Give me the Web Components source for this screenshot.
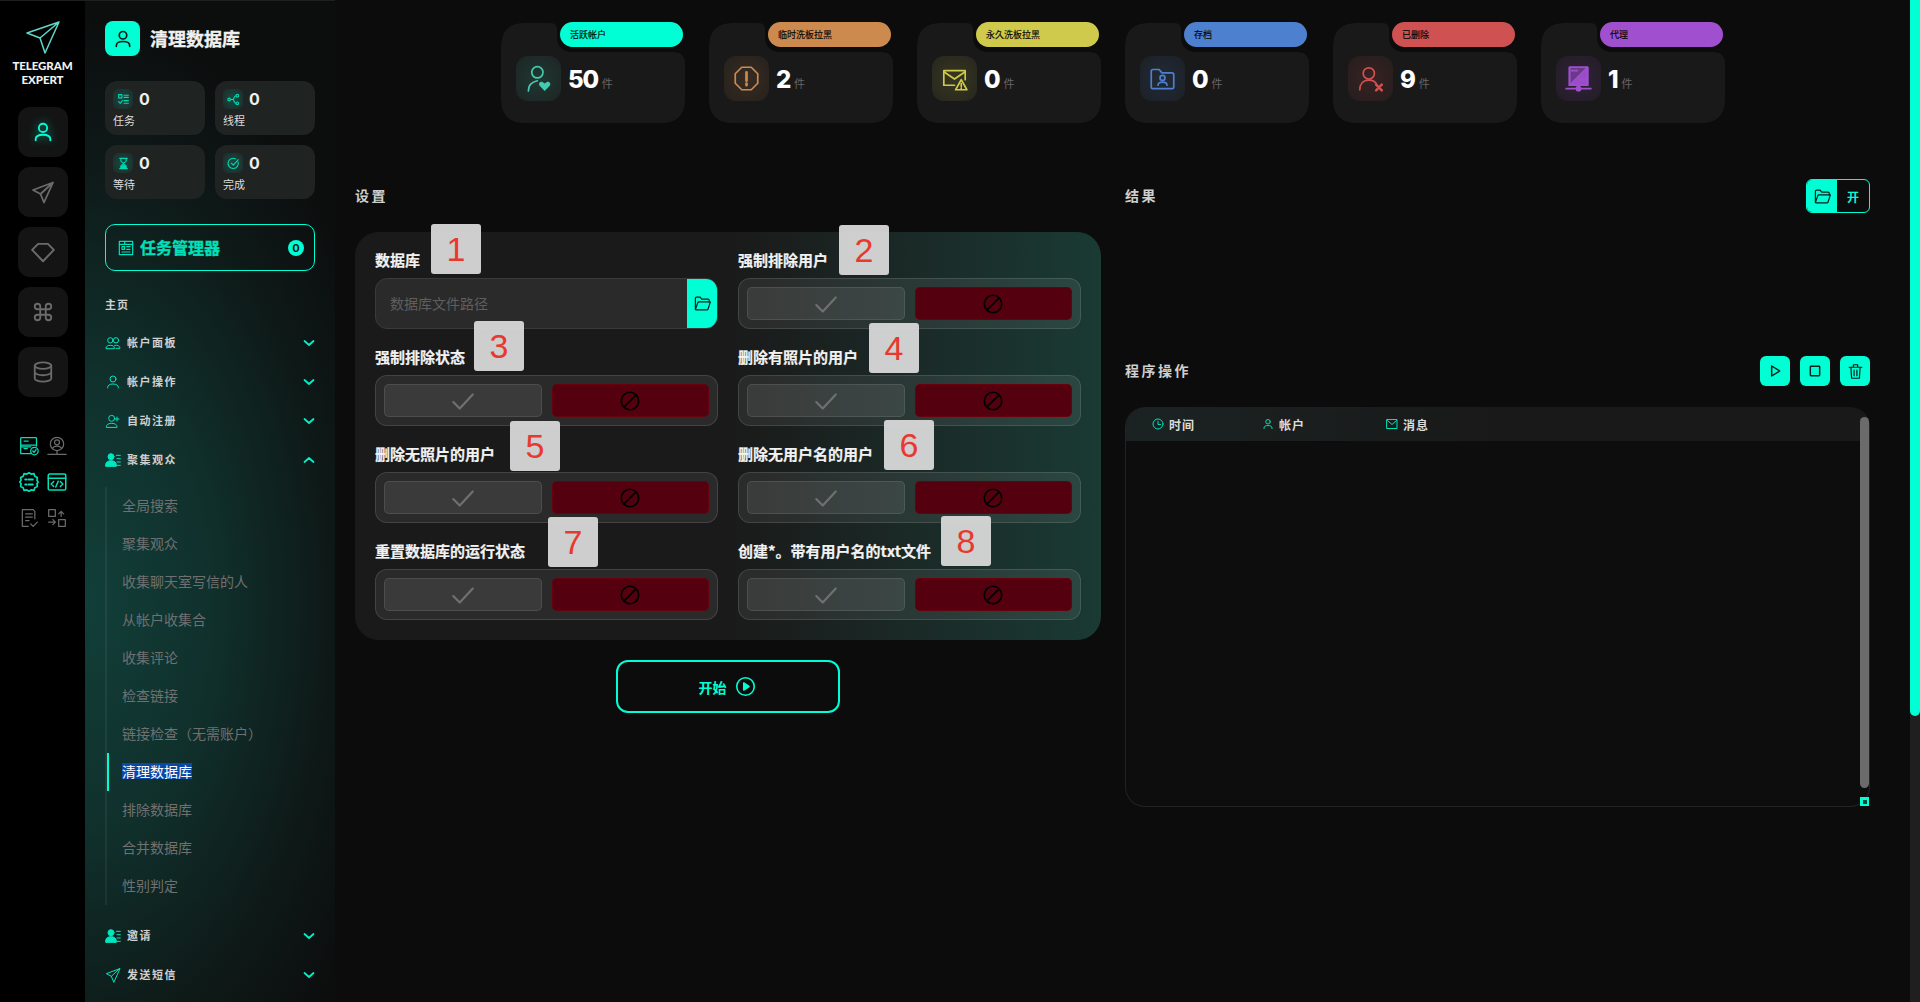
<!DOCTYPE html>
<html lang="zh">
<head>
<meta charset="utf-8">
<title>Telegram Expert</title>
<style>
  html, body { margin: 0; height: 100%; background: #0c0c0c; overflow: hidden; }
  body { font-family: "Noto Sans CJK SC", "Noto Sans", sans-serif; color: #fff; }
</style>
</head>
<body>
<te-app>
  <te-rail slot="rail"></te-rail>

  <te-side slot="side" heading="清理数据库">
    <te-mini-stat slot="stats" icon="tasks" label="任务"></te-mini-stat>
    <te-mini-stat slot="stats" icon="nodes" label="线程"></te-mini-stat>
    <te-mini-stat slot="stats" icon="hourglass" label="等待"></te-mini-stat>
    <te-mini-stat slot="stats" icon="checkCircle" label="完成"></te-mini-stat>

    <te-menu-row icon="users" label="帐户面板"></te-menu-row>
    <te-menu-row icon="user" label="帐户操作"></te-menu-row>
    <te-menu-row icon="userPlus" label="自动注册"></te-menu-row>
    <te-menu-row icon="userList" label="聚集观众" open></te-menu-row>
    <te-sub-list>
      <te-sub-item>全局搜索</te-sub-item>
      <te-sub-item>聚集观众</te-sub-item>
      <te-sub-item>收集聊天室写信的人</te-sub-item>
      <te-sub-item>从帐户收集合</te-sub-item>
      <te-sub-item>收集评论</te-sub-item>
      <te-sub-item>检查链接</te-sub-item>
      <te-sub-item>链接检查（无需账户）</te-sub-item>
      <te-sub-item active>清理数据库</te-sub-item>
      <te-sub-item>排除数据库</te-sub-item>
      <te-sub-item>合并数据库</te-sub-item>
      <te-sub-item>性别判定</te-sub-item>
    </te-sub-list>
    <te-menu-row icon="userList" label="邀请"></te-menu-row>
    <te-menu-row icon="send" label="发送短信"></te-menu-row>
  </te-side>

  <te-main slot="main">
    <te-stat-card slot="stats" label="活跃帐户" value="50" icon="userHeart" color="#00ffd5" tint="#45c9af"></te-stat-card>
    <te-stat-card slot="stats" label="临时洗板拉黑" value="2" icon="octagon" color="#cc8a4e"></te-stat-card>
    <te-stat-card slot="stats" label="永久洗板拉黑" value="0" icon="mailWarn" color="#cfca4c"></te-stat-card>
    <te-stat-card slot="stats" label="存档" value="0" icon="folderUser" color="#4d80cf"></te-stat-card>
    <te-stat-card slot="stats" label="已删除" value="9" icon="userX" color="#cf5151"></te-stat-card>
    <te-stat-card slot="stats" label="代理" value="1" icon="proxy" color="#a04fcf"></te-stat-card>

    <te-settings slot="left">
      <te-field label="数据库"><te-path-input placeholder="数据库文件路径"></te-path-input></te-field>
      <te-field label="强制排除用户"><te-toggle></te-toggle></te-field>
      <te-field label="强制排除状态"><te-toggle></te-toggle></te-field>
      <te-field label="删除有照片的用户"><te-toggle></te-toggle></te-field>
      <te-field label="删除无照片的用户"><te-toggle></te-toggle></te-field>
      <te-field label="删除无用户名的用户"><te-toggle></te-toggle></te-field>
      <te-field label="重置数据库的运行状态"><te-toggle></te-toggle></te-field>
      <te-field label="创建*。带有用户名的txt文件"><te-toggle></te-toggle></te-field>
    </te-settings>

    <te-log slot="right"></te-log>

    <te-marker slot="over" n="1" x="431" y="224"></te-marker>
    <te-marker slot="over" n="2" x="839" y="225"></te-marker>
    <te-marker slot="over" n="3" x="474" y="321"></te-marker>
    <te-marker slot="over" n="4" x="869" y="323"></te-marker>
    <te-marker slot="over" n="5" x="510" y="421"></te-marker>
    <te-marker slot="over" n="6" x="884" y="420"></te-marker>
    <te-marker slot="over" n="7" x="548" y="517"></te-marker>
    <te-marker slot="over" n="8" x="941" y="516"></te-marker>
  </te-main>
</te-app>

<script>
// stroke icons, 24x24, drawn with currentColor
const icons = {
  user: '<circle cx="12" cy="7.5" r="4.5"/><path d="M4 21v-1c0-3 3-5 8-5s8 2 8 5v1"/>',
  users: '<circle cx="8" cy="8" r="4"/><circle cx="16.5" cy="8" r="4"/><path d="M1.5 20v-.5c0-2.500 2.500-4 6.500-4s6 1.500 6 4v.5zM14.500 15.500c4.500-.5 8 1 8 4v.5h-6"/>',
  userPlus: '<circle cx="10" cy="8" r="4.500"/><path d="M2 21v-.5c0-3 3-5 8-5s8 2 8 5v.5zM18 6v6M15 9h6"/>',
  userList: '<circle cx="9" cy="7" r="4.500" fill="currentColor"/><path d="M1 21v-2c0-3 3-6 8-6s8 3 8 6v2z" fill="currentColor"/><path d="M17 5h6M18 10h5M18 15h5M18 20h5"/>',
  send: '<path d="M22 2.500 2 10l7.500 4L13 22.500zM22 2.500 9.500 14"/>',
  diamond: '<path d="M7.500 4.500h9L22 10 12 20.500 2 10z"/>',
  command: '<path d="M15 6v12a3 3 0 1 0 3-3H6a3 3 0 1 0 3 3V6a3 3 0 1 0-3 3h12a3 3 0 1 0-3-3"/>',
  database: '<ellipse cx="12" cy="5" rx="9" ry="3.500"/><path d="M3 5v14c0 1.900 4 3.500 9 3.500s9-1.600 9-3.500V5M3 12c0 1.900 4 3.500 9 3.500s9-1.600 9-3.500"/>',
  tasks: '<rect x="3" y="3" width="6" height="6"/><path d="M13 4h8M13 8h8M13 14h8M13 19h8M3 16l3 3 4-5"/>',
  nodes: '<circle cx="4" cy="12" r="2.500"/><circle cx="19" cy="5" r="2.500"/><circle cx="19" cy="19" r="2.500"/><path d="M6.500 12H11c2 0 2-7 5.500-7M11 12c2 0 2 7 5.500 7"/>',
  hourglass: '<path d="M5 2.500h14M5 21.500h14M7 3v4c0 2 5 3.500 5 5s-5 3-5 5v4M17 3v4c0 2-5 3.500-5 5s5 3 5 5v4"/><path d="M8 21v-3l4-3 4 3v3z" fill="currentColor"/>',
  checkCircle: '<path d="M20.500 9A9.500 9.500 0 1 1 16 3.500"/><path d="m8 11.500 3.500 3.500L21 5"/>',
  taskBoard: '<rect x="2" y="2" width="20" height="20"/><path d="M2 6.500h20M6 10h4v4H6zM13 10h5M13 14h5M6 18h12M10 2v4.500"/>',
  chevDown: '<path d="m3 8 9 8 9-8"/>',
  chevUp: '<path d="m3 16 9-8 9 8"/>',
  userHeart: '<circle cx="11" cy="6.500" r="5"/><path d="M3 23c0-5 3-8 8-9"/><path d="M17.500 23l-4.500-4.500c-1.500-2 .5-4 2.500-3.500l2 1.500 2-1.500c2-.5 4 1.500 2.500 3.500z" fill="currentColor" stroke="none"/>',
  octagon: '<path d="M7.800 2h8.400L22 7.800v8.400L16.200 22H7.800L2 16.200V7.800z"/><path d="M12 6.500v7.500M12 16.500v1.500" stroke-width="2.400"/>',
  mailWarn: '<path d="M12 18H2.500V5h19v8"/><path d="m2.500 6 9.500 6.500L21.500 6"/><path d="m18 13 5 9H13z"/><path d="M18 16.500V19M18 20.500v.3"/>',
  folderUser: '<path d="M2 5.500A1.500 1.500 0 0 1 3.500 4H9l2.500 3h9A1.500 1.500 0 0 1 22 8.500v11a1.500 1.500 0 0 1-1.500 1.500h-17A1.500 1.500 0 0 1 2 19.500z"/><circle cx="12" cy="11.500" r="2.200"/><path d="M8 18c0-2 1.500-2.800 4-2.800s4 .8 4 2.800"/>',
  userX: '<circle cx="10.500" cy="7.500" r="5"/><path d="M2.500 22c0-5 3-8.500 8-8.500 3.500 0 6 1.500 7 4"/><path d="m17 17.500 5 5M22 17.500l-5 5" stroke-width="2.200"/>',
  proxy: '<path d="M4 2h16v16H4z" fill="currentColor" fill-opacity=".55"/><path d="M4 18 20 2v16z" fill="currentColor" fill-opacity=".9"/><path d="M4 2h16v16H4zM1 21h22M12 18v3M6 5h5M13 13h5"/><circle cx="12" cy="21" r="1.800" fill="currentColor"/>',
  folderOpen: '<path d="M3 19V5.500A1.500 1.500 0 0 1 4.500 4H9l2 2.500h8A1.500 1.500 0 0 1 20.500 8v2"/><path d="M3 19.500 6 11a1.500 1.500 0 0 1 1.400-1H22l-3 9a1.500 1.500 0 0 1-1.400 1H4a1 1 0 0 1-1-.5z"/>',
  check: '<path d="m3 13 6 6L21 6"/>',
  ban: '<circle cx="12" cy="12" r="9.500"/><path d="M5.500 18.500l13-13"/>',
  play: '<path d="M7 4.500v15L19 12z"/>',
  stop: '<rect x="5" y="5" width="14" height="14" rx="1"/>',
  trash: '<path d="M3 6h18M9 5V2.500h6V5M5.500 6l1 15.500h11l1-15.500M10 10v8M14 10v8"/>',
  playCircle: '<circle cx="12" cy="12" r="10"/><path d="M10 8v8l6-4z" fill="currentColor"/>',
  clock: '<circle cx="12" cy="12" r="10"/><path d="M12 6.500V13h5"/>',
  mail: '<rect x="2" y="3" width="20" height="18"/><path d="m3 5 9 8 9-8"/>',
  server: '<rect x="2" y="2" width="19" height="9" rx="1"/><path d="M21 12v-1M2 11v10h13M6 6h5M6 15h4M2 13h12"/><circle cx="18.500" cy="18" r="4.500"/><path d="m16.500 18 1.500 1.500 2.500-3"/>',
  userPin: '<circle cx="12" cy="9.500" r="8"/><circle cx="12" cy="7.500" r="3"/><path d="M6.500 15c1-2.500 3-3 5.500-3s4.500.5 5.500 3M1 22h22M12 17.500V22"/>',
  gearCard: '<path d="M9.500 2.500 12 1l2.500 1.500 3.500-.5 1 3 3 1.500-.5 3.500L23 12l-1.500 2 .5 3.500-3 1.500-1 3-3.500-.5L12 23l-2.500-1.500-3.500.5-1-3-3-1.500.5-3.500L1 12l1.500-2L2 6.500 5 5l1-3z"/><path d="M7.500 9h1.500M11.500 9h5M7.500 15h1.500M11.500 15h5" stroke-width="2.400"/>',
  codeWindow: '<rect x="1.500" y="2.500" width="21" height="19" rx="1.500"/><path d="M1.500 7.500h21M8 11.500l-3 3 3 3M16 11.500l3 3-3 3M13.500 11l-3 7"/>',
  docCheck: '<path d="M11 22H4V2h13l2 2v9"/><path d="M8 7h8M8 11h8M8 15h4M14 19l3 3 5-5"/>',
  swap: '<rect x="2" y="2" width="8" height="8"/><rect x="14" y="14" width="8" height="8"/><path d="M14 7l3-3 3 3M17 4v6M2 17h8M7 14l3 3-3 3"/>'
};

class TeIcon extends HTMLElement {
  static get observedAttributes() {
    return ['name', 'size', 'sw'];
  }

  constructor() {
    super();
    this.attachShadow({ mode: 'open' });
  }

  connectedCallback() {
    this.render();
  }

  attributeChangedCallback() {
    this.render();
  }

  render() {
    const size = this.getAttribute('size') || 24;
    const sw = this.getAttribute('sw') || 2;
    this.shadowRoot.innerHTML = `
      <style>
        :host { display: inline-flex; flex: none; line-height: 0; }
        svg { fill: none; stroke: currentColor; stroke-linejoin: round; stroke-linecap: round; }
      </style>
      <svg width="${size}" height="${size}" viewBox="0 0 24 24" stroke-width="${sw}">${icons[this.getAttribute('name')] || ''}</svg>`;
  }
}
customElements.define('te-icon', TeIcon);

const appTemplate = document.createElement('template');
appTemplate.innerHTML = `
  <style>
    :host { display: flex; position: relative; height: 1002px; }
    :host::before { content: ""; position: absolute; left: 0; right: 10px; top: 0; height: 1px; background: #1f1f1f; }
    .scroll { flex: none; width: 10px; background: #1f1f1f; }
    .thumb { height: 716px; background: #00ffd5; border-radius: 0 0 5px 5px; }
  </style>
  <slot name="rail"></slot>
  <slot name="side"></slot>
  <slot name="main"></slot>
  <div class="scroll"><div class="thumb"></div></div>
`;
class TeApp extends HTMLElement {
  connectedCallback() {
    this.attachShadow({ mode: 'open' }).appendChild(appTemplate.content.cloneNode(true));
  }
}
customElements.define('te-app', TeApp);

const railTemplate = document.createElement('template');
railTemplate.innerHTML = `
  <style>
    :host { display: flex; flex-direction: column; align-items: center; flex: none; width: 85px; background: #000; box-sizing: border-box; padding-top: 20px; }
    .plane { display: block; }
    .brand { margin-top: 5px; font: 900 11.5px/14px Lato, sans-serif; text-align: center; color: #f2f2f2; letter-spacing: -.1px; }
    .nav { display: flex; flex-direction: column; gap: 10px; margin-top: 20px; }
    .nav div { display: flex; align-items: center; justify-content: center; width: 50px; height: 50px; border-radius: 12px; background: #141414; color: #6b6b6b; }
    .nav .on { color: #00ffd5; }
    .nav .on te-icon { filter: drop-shadow(0 0 5px rgba(0, 255, 213, .6)); }
    .tools { display: grid; grid-template-columns: 20px 20px; gap: 16px 8px; margin-top: 39px; color: #6b6b6b; }
    .tools .t { color: #00e0bb; }
  </style>
  <svg class="plane" width="36" height="34" viewBox="0 0 36 34" fill="none" stroke="#5fd8c8" stroke-width="1.500" stroke-linejoin="round">
    <path d="M34 2 2 13l13 5 5 15zM34 2 15 18"/>
  </svg>
  <div class="brand">TELEGRAM<br>EXPERT</div>
  <div class="nav">
    <div class="on"><te-icon name="user" size="22"></te-icon></div>
    <div><te-icon name="send" size="24" sw="1.800"></te-icon></div>
    <div><te-icon name="diamond" size="26" sw="1.800"></te-icon></div>
    <div><te-icon name="command" size="22"></te-icon></div>
    <div><te-icon name="database" size="22"></te-icon></div>
  </div>
  <div class="tools">
    <te-icon class="t" name="server" size="20" sw="1.500"></te-icon>
    <te-icon name="userPin" size="20" sw="1.500"></te-icon>
    <te-icon class="t" name="gearCard" size="20" sw="2"></te-icon>
    <te-icon class="t" name="codeWindow" size="20" sw="1.800"></te-icon>
    <te-icon name="docCheck" size="20" sw="1.500"></te-icon>
    <te-icon name="swap" size="20" sw="1.500"></te-icon>
  </div>
`;
class TeRail extends HTMLElement {
  connectedCallback() {
    this.attachShadow({ mode: 'open' }).appendChild(railTemplate.content.cloneNode(true));
  }
}
customElements.define('te-rail', TeRail);

const sideTemplate = document.createElement('template');
sideTemplate.innerHTML = `
  <style>
    :host {
      display: block; flex: none; width: 250px; box-sizing: border-box; padding: 21px 20px 0;
      background: radial-gradient(ellipse 320px 580px at 0% 60%, #123f39 0%, #10302c 40%, #0e1a18 75%, #0c0e0e 100%);
    }
    .head { display: flex; align-items: center; gap: 10px; height: 35px; }
    .logo { display: flex; align-items: center; justify-content: center; width: 35px; height: 35px; border-radius: 8px; background: #00ffd5; color: #041a16; }
    .title { font-size: 18px; line-height: 35px; font-weight: 700; color: #f0f0f0; -webkit-text-stroke: .3px #f0f0f0; }
    .stats { display: grid; grid-template-columns: 100px 100px; gap: 10px; margin-top: 25px; }
    .manager { display: flex; align-items: center; box-sizing: border-box; height: 47px; margin-top: 25px; padding: 0 10px 0 12px; border: 1px solid #00ffd5; border-radius: 10px; color: #00e0bb; }
    .manager span { margin-left: 6px; flex: 1; font-size: 16px; line-height: 20px; padding-bottom: 2px; font-weight: 700; -webkit-text-stroke: .3px #00e0bb; }
    .manager b { display: flex; align-items: center; justify-content: center; width: 16px; height: 16px; border-radius: 50%; background: #00ffd5; color: #04211c; font: 900 12px/16px Lato, sans-serif; }
    .section { margin: 25px 0 11px; font-size: 11px; line-height: 16px; font-weight: 700; letter-spacing: 1px; color: #cfcfcf; }
  </style>
  <div class="head">
    <div class="logo"><te-icon name="user" size="20"></te-icon></div>
    <div class="title"></div>
  </div>
  <div class="stats"><slot name="stats"></slot></div>
  <div class="manager"><te-icon name="taskBoard" size="16" sw="1.800"></te-icon><span>任务管理器</span><b>0</b></div>
  <div class="section">主页</div>
  <slot></slot>
`;
class TeSide extends HTMLElement {
  connectedCallback() {
    const shadow = this.attachShadow({ mode: 'open' });
    shadow.appendChild(sideTemplate.content.cloneNode(true));
    shadow.querySelector('.title').textContent = this.getAttribute('heading');
  }
}
customElements.define('te-side', TeSide);

const miniTemplate = document.createElement('template');
miniTemplate.innerHTML = `
  <style>
    :host { display: block; box-sizing: border-box; height: 54px; padding: 8px; border-radius: 12px; background: #1f2322; }
    .top { display: flex; align-items: center; gap: 6px; height: 20px; }
    .tile { display: flex; align-items: center; justify-content: center; width: 20px; height: 20px; border-radius: 5px; background: radial-gradient(circle, #1c4a41, #1d2a28); color: #00d8b4; }
    .num { font: 700 16px/20px Inter, sans-serif; color: #eee; }
    .label { margin-top: 2px; font-size: 11px; line-height: 18px; color: #ddd; }
  </style>
  <div class="top"><div class="tile"><te-icon size="13"></te-icon></div><div class="num">0</div></div>
  <div class="label"></div>
`;
class TeMiniStat extends HTMLElement {
  connectedCallback() {
    const shadow = this.attachShadow({ mode: 'open' });
    shadow.appendChild(miniTemplate.content.cloneNode(true));
    shadow.querySelector('te-icon').setAttribute('name', this.getAttribute('icon'));
    shadow.querySelector('.label').textContent = this.getAttribute('label');
  }
}
customElements.define('te-mini-stat', TeMiniStat);

const rowTemplate = document.createElement('template');
rowTemplate.innerHTML = `
  <style>
    :host { display: flex; align-items: center; height: 39px; color: #00e6c0; }
    .label { flex: 1; margin-left: 6px; padding-bottom: 2px; font-size: 11px; font-weight: 700; letter-spacing: 1.500px; color: #d0d0d0; }
    te-icon.chev { color: #00f0c8; }
  </style>
  <te-icon class="ico" size="16" sw="1.500"></te-icon><div class="label"></div><te-icon class="chev" size="12" sw="3.600"></te-icon>
`;
class TeMenuRow extends HTMLElement {
  connectedCallback() {
    const shadow = this.attachShadow({ mode: 'open' });
    shadow.appendChild(rowTemplate.content.cloneNode(true));
    shadow.querySelector('.ico').setAttribute('name', this.getAttribute('icon'));
    shadow.querySelector('.label').textContent = this.getAttribute('label');
    shadow.querySelector('.chev').setAttribute('name', this.hasAttribute('open') ? 'chevUp' : 'chevDown');
  }
}
customElements.define('te-menu-row', TeMenuRow);

class TeSubList extends HTMLElement {
  connectedCallback() {
    this.attachShadow({ mode: 'open' }).innerHTML = `
      <style>:host { display: block; margin: 8px 0 11px; border-left: 2px solid rgba(255, 255, 255, .06); }</style>
      <slot></slot>`;
  }
}
customElements.define('te-sub-list', TeSubList);

class TeSubItem extends HTMLElement {
  connectedCallback() {
    this.attachShadow({ mode: 'open' }).innerHTML = `
      <style>
        :host { display: flex; align-items: center; position: relative; box-sizing: border-box; height: 38px; padding: 0 0 2px 15px; font-size: 14px; color: #707070; }
        :host([active]) { color: #fff; }
        :host([active])::before { content: ""; position: absolute; left: 0; top: 0; bottom: 0; width: 2px; background: #00ffd5; }
        :host([active]) span { display: block; height: 16px; line-height: 16px; background: #0b47a5; }
      </style>
      <span><slot></slot></span>`;
  }
}
customElements.define('te-sub-item', TeSubItem);

const mainTemplate = document.createElement('template');
mainTemplate.innerHTML = `
  <style>
    :host { display: block; position: relative; flex: 1; min-width: 0; box-sizing: border-box; padding: 22px 40px 0 20px; background: #0c0c0c; }
    .stats { display: flex; gap: 24px; margin-left: 146px; }
    .cols { display: grid; grid-template-columns: 746px 745px; gap: 24px; margin-top: 56px; }
    .head { display: flex; align-items: center; height: 34px; margin-bottom: 19px; }
    h2 { margin: 0; padding-bottom: 2px; font-size: 14px; font-weight: 700; letter-spacing: 2.500px; color: #cfcfcf; }
    .start { display: flex; align-items: center; justify-content: center; gap: 8px; box-sizing: border-box; width: 224px; height: 53px; margin: 20px auto 0; padding-right: 2px; border: 2px solid #00ffd5; border-radius: 12px; font-size: 14px; font-weight: 700; color: #00ffd5; }
  </style>
  <div class="stats"><slot name="stats"></slot></div>
  <div class="cols">
    <div>
      <div class="head"><h2>设置</h2></div>
      <slot name="left"></slot>
      <div class="start">开始<te-icon name="playCircle" size="21" sw="1.800"></te-icon></div>
    </div>
    <slot name="right"></slot>
  </div>
  <slot name="over"></slot>
`;
class TeMain extends HTMLElement {
  connectedCallback() {
    this.attachShadow({ mode: 'open' }).appendChild(mainTemplate.content.cloneNode(true));
  }
}
customElements.define('te-main', TeMain);

const statTemplate = document.createElement('template');
statTemplate.innerHTML = `
  <style>
    :host { display: block; position: relative; flex: none; width: 184px; height: 100px; margin-top: 1px; }
    .shape { position: absolute; inset: 0; background: #191919; clip-path: path("M24 0H50Q56 0 56 6V13Q56 29 72 29H172Q184 29 184 41V76Q184 100 160 100H24Q0 100 0 76V24Q0 0 24 0Z"); }
    .pill { position: absolute; left: 59px; top: -1px; box-sizing: border-box; width: 123px; height: 25px; padding-left: 10px; border-radius: 13px; font-size: 9px; line-height: 25px; color: #050505; background: var(--c); -webkit-text-stroke: .15px #050505; }
    .body { position: relative; display: flex; align-items: center; padding: 32px 0 0 15px; }
    .tile { display: flex; align-items: center; justify-content: center; width: 45px; height: 45px; border-radius: 12px; color: var(--t); background: radial-gradient(circle, color-mix(in srgb, var(--t) 17%, #191919), color-mix(in srgb, var(--t) 7%, #191919)); }
    .num { margin: 2px 0 0 7px; font: 800 24px/45px Inter, sans-serif; letter-spacing: -1.200px; color: #fff; }
    .unit { margin: 8px 0 0 4px; font-size: 11px; color: #666; }
  </style>
  <div class="shape"></div>
  <div class="pill"></div>
  <div class="body">
    <div class="tile"><te-icon size="27" sw="1.500"></te-icon></div>
    <div class="num"></div>
    <div class="unit">件</div>
  </div>
`;
class TeStatCard extends HTMLElement {
  connectedCallback() {
    const shadow = this.attachShadow({ mode: 'open' });
    shadow.appendChild(statTemplate.content.cloneNode(true));
    this.style.setProperty('--c', this.getAttribute('color'));
    this.style.setProperty('--t', this.getAttribute('tint') || this.getAttribute('color'));
    shadow.querySelector('.pill').textContent = this.getAttribute('label');
    shadow.querySelector('.num').textContent = this.getAttribute('value');
    shadow.querySelector('te-icon').setAttribute('name', this.getAttribute('icon'));
  }
}
customElements.define('te-stat-card', TeStatCard);

class TeSettings extends HTMLElement {
  connectedCallback() {
    this.attachShadow({ mode: 'open' }).innerHTML = `
      <style>
        :host { display: grid; grid-template-columns: 343px 343px; gap: 20px; box-sizing: border-box; width: 746px; height: 408px; padding: 20px; border-radius: 24px; background: linear-gradient(90deg, #1a1a1a 0%, #1a1a1a 50%, #1a3a34 100%); }
      </style>
      <slot></slot>`;
  }
}
customElements.define('te-settings', TeSettings);

class TeField extends HTMLElement {
  connectedCallback() {
    this.attachShadow({ mode: 'open' }).innerHTML = `
      <style>
        :host { display: block; }
        .label { height: 18px; margin-bottom: 8px; font-size: 15px; line-height: 16px; font-weight: 700; color: #f2f2f2; white-space: nowrap; -webkit-text-stroke: .2px #f2f2f2; }
      </style>
      <div class="label">${this.getAttribute('label')}</div>
      <slot></slot>`;
  }
}
customElements.define('te-field', TeField);

class TePathInput extends HTMLElement {
  connectedCallback() {
    this.attachShadow({ mode: 'open' }).innerHTML = `
      <style>
        :host { display: flex; box-sizing: border-box; height: 51px; border: 1px solid #3a3a3a; border-radius: 12px; background: #2a2a2a; overflow: hidden; }
        .text { flex: 1; padding-left: 14px; font-size: 14px; line-height: 49px; color: #5f5f5f; }
        .pick { display: flex; align-items: center; justify-content: center; width: 30px; background: #00ffd5; color: #04211c; }
      </style>
      <div class="text">${this.getAttribute('placeholder')}</div>
      <div class="pick"><te-icon name="folderOpen" size="19" sw="1.500"></te-icon></div>`;
  }
}
customElements.define('te-path-input', TePathInput);

const toggleTemplate = document.createElement('template');
toggleTemplate.innerHTML = `
  <style>
    :host { display: grid; grid-template-columns: 1fr 1fr; gap: 10px; box-sizing: border-box; height: 51px; padding: 8px; border: 1px solid rgba(255, 255, 255, .12); border-radius: 12px; background: rgba(255, 255, 255, .07); }
    div { display: flex; align-items: center; justify-content: center; border-radius: 5px; }
    .yes { border: 1px solid rgba(255, 255, 255, .1); background: rgba(255, 255, 255, .08); color: #707070; }
    .no { border: 1px solid rgba(255, 0, 0, .12); background: #54000f; color: #000; }
  </style>
  <div class="yes"><te-icon name="check" size="26" sw="2"></te-icon></div>
  <div class="no"><te-icon name="ban" size="22" sw="1.800"></te-icon></div>
`;
class TeToggle extends HTMLElement {
  connectedCallback() {
    this.attachShadow({ mode: 'open' }).appendChild(toggleTemplate.content.cloneNode(true));
  }
}
customElements.define('te-toggle', TeToggle);

const logTemplate = document.createElement('template');
logTemplate.innerHTML = `
  <style>
    :host { display: block; }
    .row { display: flex; align-items: center; justify-content: space-between; }
    h2 { margin: 0; padding-bottom: 2px; font-size: 14px; font-weight: 700; letter-spacing: 2.500px; color: #cfcfcf; }
    .open { display: flex; box-sizing: border-box; width: 64px; height: 34px; border: 1px solid #00ffd5; border-radius: 6px; overflow: hidden; }
    .open div { flex: 1; display: flex; align-items: center; justify-content: center; font-size: 12px; font-weight: 700; color: #00ffd5; }
    .open .a { flex: none; width: 30px; background: #00ffd5; color: #04211c; }
    .second { height: 30px; margin-top: 143px; }
    .btns { display: flex; gap: 10px; }
    .btns div { display: flex; align-items: center; justify-content: center; width: 30px; height: 30px; border-radius: 6px; background: #00ffd5; color: #04211c; }
    .panel { position: relative; box-sizing: border-box; height: 400px; margin-top: 21px; border: 1px solid #232323; border-top: 0; border-radius: 20px; background: #0d0d0d; }
    .cols { position: relative; height: 34px; border-radius: 20px 20px 0 0; background: linear-gradient(90deg, #1b2322, #191919 50%); font-size: 12px; font-weight: 700; letter-spacing: 1px; }
    .cols div { display: flex; align-items: center; gap: 5px; color: #00e0bb; position: absolute; top: 0; height: 34px; }
    .cols span { color: #ddd; }
    .bar { position: absolute; right: 0; top: 10px; width: 9px; height: 371px; border-radius: 5px; background: #6b6b6b; }
    .grip { position: absolute; right: 0; bottom: 0; width: 9px; height: 9px; background: #00ffd5; }
    .grip::after { content: ""; position: absolute; left: 3px; top: 3px; width: 4px; height: 4px; background: #0a4a3e; }
  </style>
  <div class="row">
    <h2>结果</h2>
    <div class="open"><div class="a"><te-icon name="folderOpen" size="19" sw="1.500"></te-icon></div><div>开</div></div>
  </div>
  <div class="row second">
    <h2>程序操作</h2>
    <div class="btns">
      <div><te-icon name="play" size="16" sw="2.200"></te-icon></div>
      <div><te-icon name="stop" size="16" sw="2.200"></te-icon></div>
      <div><te-icon name="trash" size="17" sw="1.700"></te-icon></div>
    </div>
  </div>
  <div class="panel">
    <div class="cols">
      <div style="left: 26px"><te-icon name="clock" size="12"></te-icon><span>时间</span></div>
      <div style="left: 136px"><te-icon name="user" size="12"></te-icon><span>帐户</span></div>
      <div style="left: 260px"><te-icon name="mail" size="12"></te-icon><span>消息</span></div>
    </div>
    <div class="bar"></div>
    <div class="grip"></div>
  </div>
`;
class TeLog extends HTMLElement {
  connectedCallback() {
    this.attachShadow({ mode: 'open' }).appendChild(logTemplate.content.cloneNode(true));
  }
}
customElements.define('te-log', TeLog);

// numbered notes that were pasted over the screenshot; x and y are page coordinates
class TeMarker extends HTMLElement {
  connectedCallback() {
    this.style.left = (this.getAttribute('x') - 335) + 'px';
    this.style.top = this.getAttribute('y') + 'px';
    this.attachShadow({ mode: 'open' }).innerHTML = `
      <style>
        :host { position: absolute; display: flex; align-items: center; justify-content: center; width: 50px; height: 50px; border-radius: 3px; background: rgba(216, 216, 216, .95); font: 34px/50px "Liberation Sans", sans-serif; color: #e8392e; }
      </style>
      ${this.getAttribute('n')}`;
  }
}
customElements.define('te-marker', TeMarker);
</script>
</body>
</html>
